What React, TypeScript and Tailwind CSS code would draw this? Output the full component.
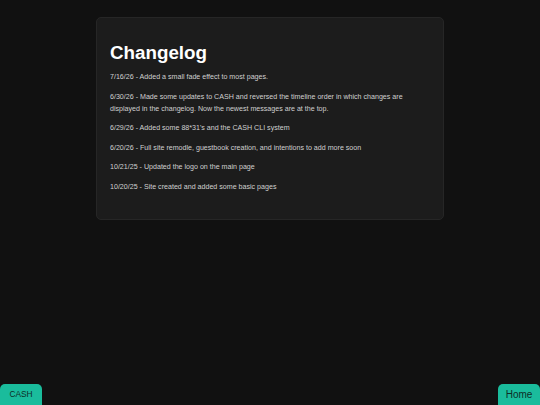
export default function App() {
  const entries = [
    "7/16/26 - Added a small fade effect to most pages.",
    "6/30/26 - Made some updates to CASH and reversed the timeline order in which changes are displayed in the changelog. Now the newest messages are at the top.",
    "6/29/26 - Added some 88*31's and the CASH CLI system",
    "6/20/26 - Full site remodle, guestbook creation, and intentions to add more soon",
    "10/21/25 - Updated the logo on the main page",
    "10/20/25 - Site created and added some basic pages",
  ];
  return (
    <div
      className="min-h-screen w-full bg-[#111111] pt-[17px]"
      style={{ fontFamily: '"Liberation Sans", Arial, sans-serif' }}
    >
      <div className="mx-auto w-[348px] rounded-[5px] border border-[#262626] bg-[#1c1c1c] px-[13px] pt-[24px] pb-[26px]">
        <h1 className="m-0 text-[18.8px] leading-[21px] font-bold text-white">Changelog</h1>
        <div className="mt-[8px] flex flex-col gap-[7.5px]">
          {entries.map((e) => (
            <p key={e} className="m-0 text-[7.1px] leading-[12px] text-[#d0d0d0]">
              {e}
            </p>
          ))}
        </div>
      </div>
      <div className="fixed bottom-0 left-0 flex h-[21px] w-[42px] items-center justify-center rounded-t-[5px] bg-[#1abc9c] text-[8.3px] text-[#0d2e27]">
        CASH
      </div>
      <div className="fixed right-0 bottom-0 flex h-[21px] w-[42px] items-center justify-center rounded-t-[5px] bg-[#1abc9c] text-[10px] text-[#0d2e27]">
        Home
      </div>
    </div>
  );
}
